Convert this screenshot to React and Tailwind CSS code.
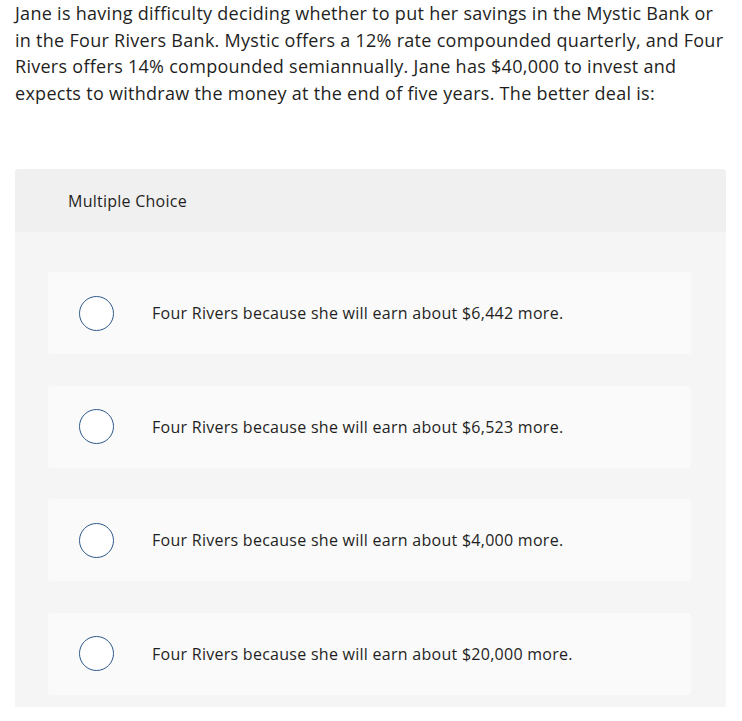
import React from "react";

const options = [
  "Four Rivers because she will earn about $6,442 more.",
  "Four Rivers because she will earn about $6,523 more.",
  "Four Rivers because she will earn about $4,000 more.",
  "Four Rivers because she will earn about $20,000 more.",
];

export default function App() {
  return (
    <div className="bg-white min-h-[721px] w-[742px] text-[#1f1f23]" style={{ fontFamily: "'Open Sans', sans-serif" }}>
      <p className="pl-[15px] pr-[12px] text-[18px] leading-[26.5px] tracking-[0.28px]">
        Jane is having difficulty deciding whether to put her savings in the Mystic Bank or in the Four Rivers Bank. Mystic offers a 12% rate compounded quarterly, and Four Rivers offers 14% compounded semiannually. Jane has $40,000 to invest and expects to withdraw the money at the end of five years. The better deal is:
      </p>
      <div className="ml-[15px] mt-[63px] w-[711px] rounded-t-[4px] bg-[#f5f5f5] pb-[12px]">
        <div className="h-[63px] rounded-t-[4px] bg-[#f0f0f0] pl-[53px] flex items-center text-[16px] tracking-[0.25px]">
          Multiple Choice
        </div>
        <div className="flex flex-col gap-[31.5px] pt-[40px] pl-[33px] pr-[35px]">
          {options.map((o, i) => (
            <div key={i} className="h-[82px] rounded-[4px] bg-[#fafafa] flex items-center pl-[31px]">
              <span className="w-[35px] h-[35px] rounded-full border-[1.5px] border-[#2e5a8a] bg-white shrink-0" />
              <span className="ml-[38px] text-[16px] tracking-[0.27px]">{o}</span>
            </div>
          ))}
        </div>
      </div>
    </div>
  );
}
